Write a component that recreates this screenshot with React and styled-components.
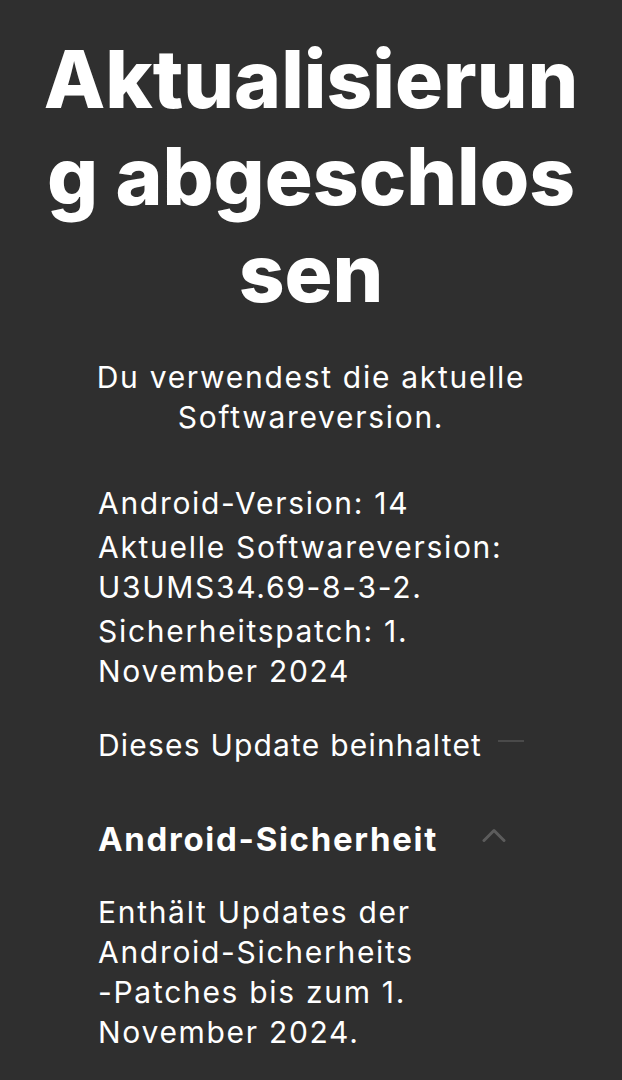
import React from "react";
import styled, { createGlobalStyle } from "styled-components";

const GlobalStyle = createGlobalStyle`
  html, body {
    margin: 0;
    padding: 0;
    background: #2f2f2f;
  }
  * { box-sizing: border-box; }
`;

const Page = styled.div`
  width: 622px;
  min-height: 1080px;
  background: #2f2f2f;
  color: #ffffff;
  font-family: Inter, "Noto Sans", sans-serif;
  display: flex;
  flex-direction: column;
  padding: 30px 0 0;
  overflow: hidden;
`;

const Title = styled.h1`
  margin: 0;
  text-align: center;
  font-size: 80px;
  font-weight: 800;
  line-height: 97px;
  letter-spacing: 0px;
  white-space: nowrap;
`;

const bodyText = `
  font-size: 30px;
  font-weight: 400;
  line-height: 40px;
  letter-spacing: 1.7px;
  white-space: nowrap;
`;

const Subtitle = styled.p`
  margin: 36px 0 0;
  text-align: center;
  ${bodyText}
`;

const Content = styled.div`
  padding: 0 98px;
  display: flex;
  flex-direction: column;
`;

const InfoList = styled.div`
  margin-top: 46px;
  display: flex;
  flex-direction: column;
  gap: 4px;
`;

const InfoItem = styled.p`
  margin: 0;
  ${bodyText}
`;

const SectionRow = styled.div`
  margin-top: 34px;
  display: flex;
  align-items: center;
  gap: 16px;
`;

const SectionLabel = styled.span`
  ${bodyText}
  letter-spacing: 1.2px;
`;

const Divider = styled.div`
  flex: 1;
  height: 2px;
  background: #4a4a4a;
  margin-bottom: 8px;
`;

const AccordionHeader = styled.div`
  margin-top: 52px;
  display: flex;
  align-items: center;
  justify-content: space-between;
  padding-right: 18px;
`;

const AccordionTitle = styled.h2`
  margin: 0;
  font-size: 33px;
  font-weight: 700;
  line-height: 44px;
  letter-spacing: 1.7px;
  white-space: nowrap;
`;

const Chevron = styled.svg`
  width: 24px;
  height: 14px;
  margin-bottom: 8px;
`;

const AccordionBody = styled.p`
  margin: 31px 0 0;
  ${bodyText}
`;

export default function App() {
  return (
    <>
      <GlobalStyle />
      <Page>
        <Title>
          Aktualisierun
          <br />g abgeschlos
          <br />
          sen
        </Title>
        <Subtitle>
          Du verwendest die aktuelle
          <br />
          Softwareversion.
        </Subtitle>
        <Content>
          <InfoList>
            <InfoItem>Android-Version: 14</InfoItem>
            <InfoItem>
              Aktuelle Softwareversion:
              <br />
              U3UMS34.69-8-3-2.
            </InfoItem>
            <InfoItem>
              Sicherheitspatch: 1.
              <br />
              November 2024
            </InfoItem>
          </InfoList>
          <SectionRow>
            <SectionLabel>Dieses Update beinhaltet</SectionLabel>
            <Divider />
          </SectionRow>
          <AccordionHeader>
            <AccordionTitle>Android-Sicherheit</AccordionTitle>
            <Chevron viewBox="0 0 24 14" fill="none">
              <polyline
                points="2,12.5 12,2.5 22,12.5"
                stroke="#5c5c5c"
                strokeWidth="3"
                strokeLinecap="round"
                strokeLinejoin="round"
              />
            </Chevron>
          </AccordionHeader>
          <AccordionBody>
            Enthält Updates der
            <br />
            Android-Sicherheits
            <br />
            -Patches bis zum 1.
            <br />
            November 2024.
          </AccordionBody>
        </Content>
      </Page>
    </>
  );
}
